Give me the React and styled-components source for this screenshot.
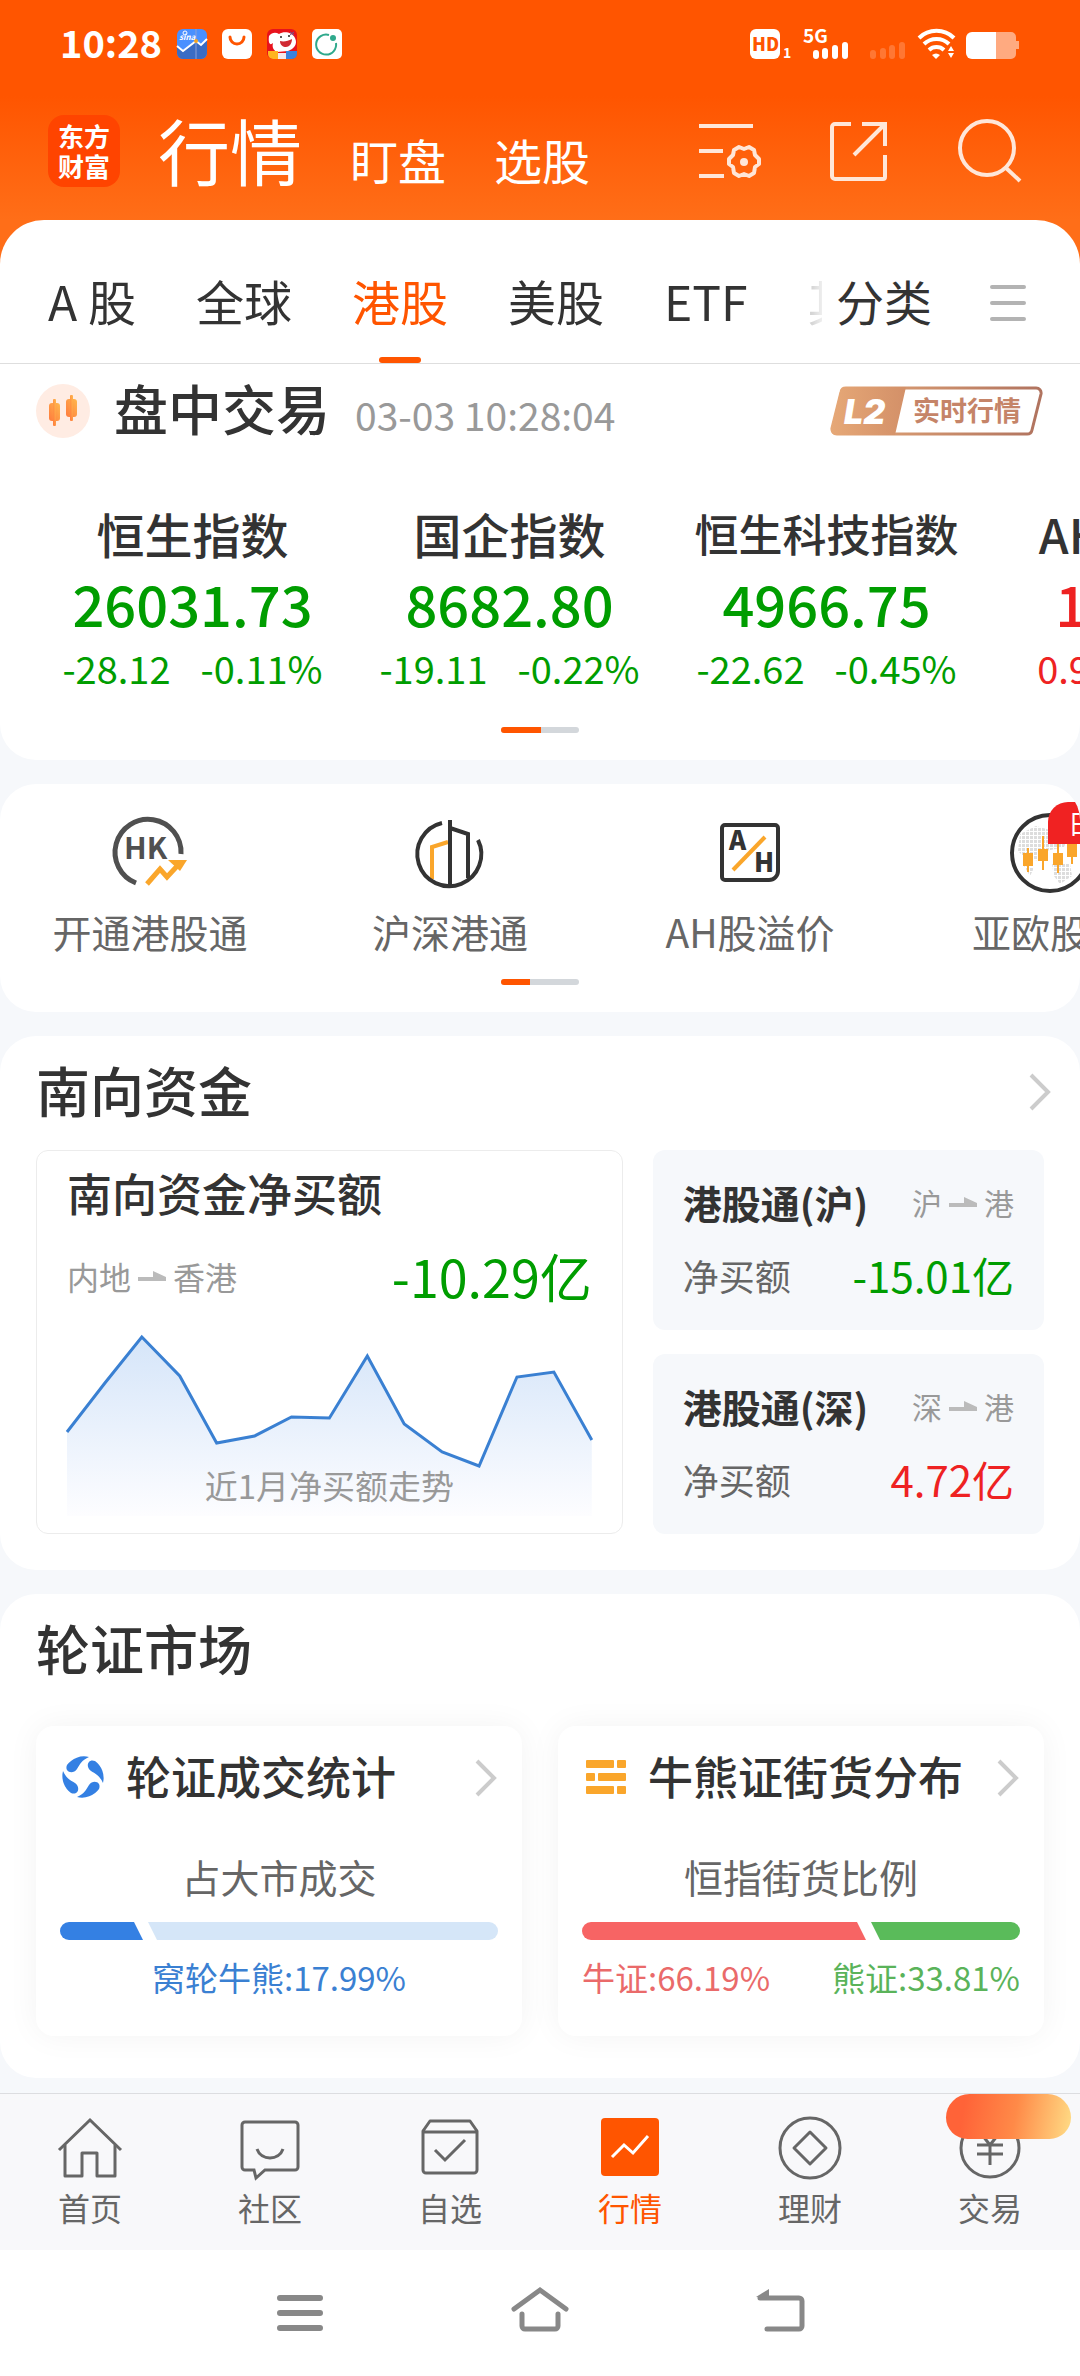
import React, { useState } from 'react'
import styled, { createGlobalStyle } from 'styled-components'

const GlobalStyle = createGlobalStyle`
  * {
    box-sizing: border-box;
  }

  body {
    margin: 0;
    background: #fff;
    font-family: "Noto Sans CJK SC", "Noto Sans", sans-serif;
    color: #333;
  }

  button {
    margin: 0;
    padding: 0;
    border: 0;
    background: none;
    font: inherit;
    color: inherit;
    cursor: pointer;
  }

  a {
    color: inherit;
    text-decoration: none;
  }

  h1, h2, h3, p {
    margin: 0;
  }

  svg {
    display: block;
    flex: none;
    overflow: visible;
  }
`

/* ---------- layout ---------- */

const Page = styled.div`
  display: flex;
  flex-direction: column;
  min-height: 100vh;
  overflow: hidden;
  background: #f6f8fb;
`

const Header = styled.header`
  background: linear-gradient(#ff5500 0, #ff5500 96px, #ff6e18 220px);
  padding-bottom: 50px;
`

const StatusBar = styled.div`
  display: flex;
  align-items: center;
  justify-content: space-between;
  height: 88px;
  padding: 0 58px 0 60px;
  color: #fff;
`

const StatusGroup = styled.div`
  display: flex;
  align-items: center;
  gap: ${props => props.$gap}px;
`

const Clock = styled.span`
  padding-bottom: 4px;
  font-size: 38px;
  line-height: 48px;
  font-weight: 700;
`

const TopNav = styled.div`
  display: flex;
  align-items: center;
  height: 126px;
  padding: 0 58px 0 48px;
  color: #fff;
`

const Logo = styled.a`
  display: flex;
  flex-direction: column;
  align-items: center;
  justify-content: center;
  width: 72px;
  height: 72px;
  margin-right: 38px;
  border-radius: 16px;
  background: #ff4400;
  font-size: 26px;
  line-height: 30px;
  font-weight: 700;
`

const Titles = styled.nav`
  display: flex;
  align-items: baseline;
  gap: 48px;
  padding-bottom: 4px;
`

const PageTitle = styled.h1`
  font-size: 72px;
  line-height: 72px;
  font-weight: 400;
`

const TitleLink = styled.a`
  font-size: 48px;
  line-height: 48px;
`

const TopActions = styled.div`
  display: flex;
  gap: 66px;
  margin-left: auto;
  color: #ffe6d8;
`

const Card = styled.section`
  margin-bottom: 24px;
  border-radius: 36px;
  background: #fff;
  overflow: hidden;
`

const TopCard = styled(Card)`
  margin-top: -44px;
  border-radius: 44px 44px 36px 36px;
`

/* ---------- tabs ---------- */

const TabBar = styled.div`
  display: flex;
  height: 144px;
  padding: 0 54px 0 48px;
  border-bottom: 1px solid #dedede;
`

const TabList = styled.div`
  display: flex;
  flex: 1;
  gap: 60px;
  min-width: 0;
  overflow: hidden;
  mask-image: linear-gradient(to left, rgba(0, 0, 0, 0.08), rgba(0, 0, 0, 0.24) 13px, #000 60px);
`

const Tab = styled.button`
  display: flex;
  flex: none;
  flex-direction: column;
  align-items: center;
  padding-top: 48px;
  font-size: 48px;
  line-height: 64px;
  white-space: nowrap;
  color: ${props => (props.$active ? '#ff5500' : '#333')};

  &::after {
    content: "";
    width: 42px;
    height: 6px;
    margin-top: auto;
    border-radius: 3px;
    background: ${props => (props.$active ? '#ff5500' : 'transparent')};
  }
`

const CategoryButton = styled(Tab)`
  margin: 0 58px 0 14px;
`

const MenuButton = styled.button`
  padding-top: 22px;
`

/* ---------- index section ---------- */

const MarketHead = styled.div`
  display: flex;
  align-items: center;
  gap: 24px;
  height: 94px;
  padding: 0 36px;
`

const MarketTitle = styled.div`
  display: flex;
  flex: 1;
  align-items: baseline;
  gap: 25px;
  padding-bottom: 6px;
`

const SectionTitle = styled.h2`
  font-size: 54px;
  line-height: 72px;
  font-weight: 500;
`

const Time = styled.time`
  font-size: 39px;
  line-height: 48px;
  color: #999;
`

const IndexList = styled.div`
  display: flex;
  padding: 45px 34px 0;
`

const IndexItem = styled.div`
  display: flex;
  flex: none;
  flex-direction: column;
  align-items: center;
  width: 317px;
  color: ${props => (props.$up ? '#ee2222' : '#009d00')};
`

const IndexName = styled.h3`
  font-size: ${props => (props.$long ? 44 : 48)}px;
  line-height: 60px;
  font-weight: 500;
  color: #333;
`

const IndexValue = styled.div`
  font-size: 56px;
  line-height: 80px;
  font-weight: 500;
`

const IndexChange = styled.div`
  display: flex;
  gap: 30px;
  font-size: 38px;
  line-height: 50px;
`

const Pager = styled.div`
  width: 78px;
  height: 6px;
  margin: ${props => props.$top}px auto 27px;
  border-radius: 3px;
  background: #d3d7db;
  overflow: hidden;

  &::before {
    content: "";
    display: block;
    width: ${props => props.$active}px;
    height: 6px;
    background: #ff5500;
  }
`

/* ---------- shortcuts ---------- */

const Shortcuts = styled.div`
  display: flex;
  padding-top: 28px;
`

const Shortcut = styled.a`
  position: relative;
  display: flex;
  flex: none;
  flex-direction: column;
  align-items: center;
  gap: 15px;
  width: 300px;
  font-size: 39px;
  line-height: 48px;
  color: #666;
`

const ShortcutBadge = styled.span`
  position: absolute;
  top: -10px;
  left: 148px;
  padding: 0 20px;
  border-radius: 20px 20px 20px 0;
  background: #f02222;
  font-size: 26px;
  line-height: 42px;
  white-space: nowrap;
  color: #fff;
`

/* ---------- southbound funds ---------- */

const CardHead = styled.div`
  display: flex;
  align-items: center;
  justify-content: space-between;
  padding: 18px 28px 0 36px;
`

const FundGrid = styled.div`
  display: grid;
  grid-template-columns: 3fr 2fr;
  grid-template-rows: 180px 180px;
  gap: 24px 30px;
  padding: 24px 36px 36px;
`

const FlowPanel = styled.div`
  position: relative;
  grid-row: span 2;
  padding: 18px 30px;
  border: 1px solid #ececec;
  border-radius: 12px;
`

const PanelTitle = styled.h3`
  font-size: 45px;
  line-height: 48px;
  font-weight: 500;
`

const Row = styled.div`
  display: flex;
  align-items: center;
  justify-content: space-between;
`

const FlowRow = styled(Row)`
  margin: 29px 0 30px;
`

const Route = styled.span`
  display: flex;
  align-items: center;
  gap: 7px;
  font-size: ${props => (props.$small ? 30 : 32)}px;
  line-height: 48px;
  color: #999;
`

const Amount = styled.span`
  font-size: ${props => (props.$large ? 52 : 42)}px;
  line-height: ${props => (props.$large ? 60 : 48)}px;
  color: ${props => (props.$up ? '#ee2222' : '#009d00')};
`

const ChartCaption = styled.div`
  position: absolute;
  right: 0;
  bottom: 28px;
  left: 0;
  text-align: center;
  font-size: 33px;
  line-height: 40px;
  color: #999;
`

const ConnectCard = styled.div`
  display: flex;
  flex-direction: column;
  gap: 25px;
  padding: 28px 30px 0;
  border-radius: 12px;
  background: #f6f8fb;
`

const ConnectTitle = styled.h3`
  font-size: 39px;
  line-height: 48px;
  font-weight: 700;
`

const ConnectLabel = styled.span`
  font-size: 36px;
  line-height: 48px;
  color: #666;
`

/* ---------- warrants ---------- */

const WarrantGrid = styled.div`
  display: grid;
  grid-template-columns: 1fr 1fr;
  gap: 36px;
  padding: 42px 36px;
`

const WarrantCard = styled.div`
  height: 310px;
  padding: 24px 24px 0;
  border-radius: 18px;
  box-shadow: 0 0 32px rgba(0, 0, 0, 0.05);
`

const WarrantHead = styled.div`
  display: flex;
  align-items: center;
  gap: 22px;

  h3 {
    flex: 1;
    line-height: 52px;
    white-space: nowrap;
  }
`

const WarrantCaption = styled.div`
  margin: 50px 0 22px;
  text-align: center;
  font-size: 39px;
  line-height: 48px;
  color: #666;
`

const Ratio = styled.div`
  display: flex;
  gap: 5px;
  height: 18px;
  border-radius: 9px;
  overflow: hidden;
`

const RatioPart = styled.div`
  background: ${props => props.$color};
  clip-path: ${props =>
    props.$end
      ? 'polygon(0 0, 100% 0, 100% 100%, 9px 100%)'
      : 'polygon(0 0, calc(100% - 9px) 0, 100% 100%, 0 100%)'};
`

const RatioLabels = styled.div`
  display: flex;
  justify-content: ${props => (props.$single ? 'center' : 'space-between')};
  margin-top: 17px;
  font-size: 33px;
  line-height: 40px;
`

const RatioLabel = styled.span`
  color: ${props => props.$color};
`

/* ---------- bottom bars ---------- */

const BottomNav = styled.nav`
  display: grid;
  grid-template-columns: repeat(6, 1fr);
  margin-top: -9px;
  border-top: 1px solid #dcdde0;
  background: #f8f8fa;
`

const NavItem = styled.a`
  position: relative;
  display: flex;
  flex-direction: column;
  align-items: center;
  gap: 7px;
  padding: 22px 0 23px;
  font-size: 32px;
  line-height: 40px;
  color: ${props => (props.$active ? '#ff5500' : '#666')};
`

const NavBadge = styled.span`
  position: absolute;
  top: 0;
  right: 9px;
  width: 125px;
  height: 45px;
  border-radius: 24px 24px 22px 22px;
  background: linear-gradient(100deg, #ff6338 15%, #ff8a48 55%, #ffd983 98%);
`

const SystemNav = styled.div`
  display: flex;
  flex: 1;
  justify-content: center;
  gap: 176px;
  padding: 30px 0 32px;
  background: #fff;
  color: #888;
`

/* ---------- icons ---------- */

const Icon = ({ size = 64, width = 3, children }) => (
  <svg
    width={size}
    height={size}
    viewBox={`0 0 ${size} ${size}`}
    fill="none"
    stroke="currentColor"
    strokeWidth={width}
    aria-hidden="true"
  >
    {children}
  </svg>
)

const Chevron = () => (
  <svg width="24" height="40" viewBox="0 0 24 40" fill="none" stroke="#ccc" strokeWidth="4" aria-hidden="true">
    <path d="M3 5l17 17L3 39" />
  </svg>
)

const HalfArrow = () => (
  <svg width="28" height="12" viewBox="0 0 28 12" fill="#bbb" aria-hidden="true">
    <path d="M0 7h15V1l13 6v4H0z" />
  </svg>
)

const AppIcons = () => (
  <>
    <svg width="30" height="30" viewBox="0 0 30 30" aria-hidden="true">
      <rect width="30" height="30" rx="6" fill="#4a90ff" />
      <path d="M0 17l6 5 13-10 5 4 6-6v14a6 6 0 0 1-6 6H6a6 6 0 0 1-6-6z" fill="#3a6cc4" />
      <path d="M0 17l6 5 13-10 5 4 6-6" fill="none" stroke="#fff" strokeWidth="2" />
      <path d="M19 0v30" stroke="#8aa0d8" />
      <circle cx="19" cy="12" r="2" fill="#f5a623" />
      <circle cx="8" cy="4" r="2" fill="none" stroke="#fff" />
      <text x="2" y="11" fill="#fff" fontSize="8" fontWeight="700" fontStyle="italic">sina</text>
    </svg>
    <svg width="30" height="30" viewBox="0 0 30 30" aria-hidden="true">
      <rect width="30" height="30" rx="6" fill="#fff" />
      <path d="M8 8a7 7 0 0 0 14 0" fill="none" stroke="#ff5500" strokeWidth="3" strokeLinecap="round" />
    </svg>
    <svg width="30" height="30" viewBox="0 0 30 30" aria-hidden="true">
      <rect width="30" height="30" rx="6" fill="#e8121c" />
      <path d="M2 7c3-4 7-4 10-2 5-3 13-2 16 4 3 6-1 11-7 13l-11 1c-4-2-5-5-4-9-3 3-5 0-4-7z" fill="#fff" />
      <path d="M13 12c4 1 8 0 12-2 0 5-3 8-6 8s-6-2-6-6z" fill="#d02a33" />
      <circle cx="14" cy="8" r="1" fill="#222" />
      <circle cx="22" cy="7" r="1" fill="#222" />
      <path d="M1 22h10v8H6a5 5 0 0 1-5-5z" fill="#ffb41e" />
      <path d="M11 24h8v6h-8z" fill="#f4e8ea" />
      <path d="M19 22h11v3a5 5 0 0 1-5 5h-6z" fill="#3a82dd" />
      <path d="M23 3l4 3m0-3l-4 3" stroke="#6a5a9a" />
    </svg>
    <svg width="30" height="30" viewBox="0 0 30 30" aria-hidden="true">
      <rect width="30" height="30" rx="5" fill="#fff" />
      <path d="M17 6a10 10 0 1 0 7 8" fill="none" stroke="#2fa98c" strokeWidth="2" />
      <circle cx="21" cy="9" r="3" fill="#2fa98c" />
    </svg>
  </>
)

const StatusIcons = () => (
  <svg width="272" height="32" viewBox="0 0 272 32" fill="#fff" aria-hidden="true">
    <rect x="0" y="1" width="30" height="30" rx="6" />
    <text x="2" y="23" fill="#ff5500" fontSize="18" fontWeight="900">HD</text>
    <text x="33" y="30" fontSize="14" fontWeight="700">1</text>
    <text x="53" y="15" fontSize="19" fontWeight="700">5G</text>
    <rect x="63" y="22" width="6" height="9" rx="3" />
    <rect x="72" y="20" width="6" height="11" rx="3" />
    <rect x="82" y="17" width="6" height="14" rx="3" />
    <rect x="92" y="14" width="6" height="17" rx="3" />
    <g opacity="0.2">
      <rect x="120" y="22" width="6" height="9" rx="3" />
      <rect x="130" y="20" width="6" height="11" rx="3" />
      <rect x="139" y="17" width="6" height="14" rx="3" />
      <rect x="149" y="14" width="6" height="17" rx="3" />
    </g>
    <g fill="none" stroke="#fff" strokeWidth="4">
      <path d="M169 10a25 25 0 0 1 35 0" />
      <path d="M174 16a18 18 0 0 1 25 0" />
      <path d="M179 22a11 11 0 0 1 15 0" />
    </g>
    <path d="M182 27q4-3 8 0l-4 4z" />
    <path d="M198 23l3-5 3 5zM198 25h6l-3 5z" />
    <path d="M266 8v18a5 5 0 0 1-5 5h-15V4h15a5 5 0 0 1 5 5v4h3v8h-3z" opacity="0.5" />
    <path d="M246 4h-24a6 6 0 0 0-6 6v15a6 6 0 0 0 6 6h24z" />
  </svg>
)

const CandleIcon = () => (
  <svg width="54" height="54" viewBox="0 0 54 54" aria-hidden="true">
    <defs>
      <linearGradient id="candle" x1="0" y1="1" x2="1" y2="0">
        <stop offset="0" stopColor="#ff7a3d" />
        <stop offset="1" stopColor="#ffb84d" />
      </linearGradient>
    </defs>
    <circle cx="27" cy="27" r="27" fill="#ffece3" />
    <g fill="url(#candle)">
      <rect x="13" y="19" width="11" height="18" rx="3" />
      <rect x="17" y="15" width="3" height="27" rx="1" />
      <rect x="30" y="15" width="11" height="18" rx="3" />
      <rect x="34" y="11" width="3" height="26" rx="1" />
    </g>
  </svg>
)

const LevelTwoBadge = () => (
  <svg width="214" height="50" viewBox="0 0 214 50" role="img" aria-label="L2 实时行情">
    <defs>
      <linearGradient id="level" x1="0" y1="0" x2="1" y2="0">
        <stop offset="0" stopColor="#e6a877" />
        <stop offset="1" stopColor="#b0735f" />
      </linearGradient>
      <linearGradient id="levelFill" x1="0" y1="0" x2="1" y2="0">
        <stop offset="0" stopColor="#e6a877" />
        <stop offset="1" stopColor="#d39068" />
      </linearGradient>
    </defs>
    <path d="M16 2h190a5 5 0 0 1 5 6l-9 36a5 5 0 0 1-5 4H7a5 5 0 0 1-5-6l9-36a5 5 0 0 1 5-4z" fill="#fff" stroke="url(#level)" strokeWidth="3" />
    <path d="M15 1h61L65 49H6a5 5 0 0 1-5-6l9-37a5 5 0 0 1 5-5z" fill="url(#levelFill)" />
    <text x="14" y="38" fill="#fff" fontSize="34" fontWeight="900" fontStyle="italic" fontFamily="Inter, sans-serif">L2</text>
    <text x="83" y="35" fill="#c58468" fontSize="27" fontWeight="700">实时行情</text>
  </svg>
)

const HkIcon = () => (
  <Icon size={80} width={5}>
    <path d="M26 71A33 33 0 1 1 71 42" stroke="#505050" />
    <text x="14" y="47" fill="#505050" stroke="none" fontSize="30" fontWeight="700">HK</text>
    <path d="M37 72l13-15 7 8 13-14" stroke="#faa62b" />
    <path d="M58 48h19l-7 11z" fill="#faa62b" stroke="none" />
  </Icon>
)

const BuildingIcon = () => (
  <Icon size={80} width={4}>
    <path d="M22 67V35l16-5" stroke="#faa62b" />
    <g stroke="#333">
      <path d="M32 11a32 32 0 1 0 36 17" />
      <path d="M40 8v65M40 16l18 6v44" />
    </g>
  </Icon>
)

const AhIcon = () => (
  <Icon size={80} width={4}>
    <path d="M15 13h50a3 3 0 0 1 3 3v43a9 9 0 0 1-9 9H15a3 3 0 0 1-3-3V16a3 3 0 0 1 3-3z" stroke="#333" />
    <path d="M23 58l32-33" stroke="#faa62b" />
    <text x="19" y="38" fill="#333" stroke="none" fontSize="26" fontWeight="900">A</text>
    <text x="44" y="60" fill="#333" stroke="none" fontSize="26" fontWeight="900">H</text>
  </Icon>
)

const GlobeIcon = () => (
  <Icon size={80} width={4}>
    <defs>
      <pattern id="dots" width="4" height="4" patternUnits="userSpaceOnUse">
        <rect width="3" height="3" fill="#ddd" stroke="none" />
      </pattern>
    </defs>
    <path d="M10 22l16-8 14 4 20 3-6 14-18 4-4 10-16-2-8-8zM42 52h18l2 12-12 8-6-8zM14 54l10 2-4 8z" fill="url(#dots)" stroke="none" />
    <circle cx="40" cy="41" r="38" stroke="#333" />
    <path d="M18 36v24M33 24v34M48 30v31M62 28v24" stroke="#faa62b" strokeWidth="2" />
    <path d="M18 41v13M33 37v12M48 41v12M62 32v13" stroke="#faa62b" strokeWidth="10" />
  </Icon>
)

const SwirlIcon = () => (
  <svg width="44" height="44" viewBox="0 0 44 44" fill="#3480e3" aria-hidden="true">
    {[0, 90, 180, 270].map(angle => (
      <path key={angle} transform={`rotate(${angle} 23 23)`} d="M29 3A21 21 0 0 0 7 11C4 18 13 21 17 15c3-5 5-9 12-12z" />
    ))}
  </svg>
)

const BricksIcon = () => (
  <svg width="44" height="44" viewBox="0 0 44 44" fill="#faa62b" aria-hidden="true">
    <rect x="4" y="6" width="28" height="8" rx="1" />
    <rect x="35" y="6" width="9" height="8" rx="1" />
    <rect x="4" y="19" width="9" height="8" rx="1" />
    <rect x="16" y="19" width="28" height="8" rx="1" />
    <rect x="4" y="32" width="28" height="8" rx="1" />
    <rect x="35" y="32" width="9" height="8" rx="1" />
  </svg>
)

const navIcons = {
  home: (
    <Icon>
      <path d="M1 34L32 4l31 30" />
      <path d="M7 29v31h17V37h15v23h18V29" strokeLinejoin="round" />
    </Icon>
  ),
  community: (
    <Icon>
      <path d="M7 6h50a3 3 0 0 1 3 3v42a3 3 0 0 1-3 3H27l-9 8-2-8H7a3 3 0 0 1-3-3V9a3 3 0 0 1 3-3z" />
      <path d="M19 33c4 12 22 12 26 0" />
    </Icon>
  ),
  watch: (
    <Icon>
      <path d="M5 15l7-10h40l7 10v39a3 3 0 0 1-3 3H8a3 3 0 0 1-3-3zM5 16h54" strokeLinejoin="round" />
      <path d="M17 34l10 10 20-20" />
    </Icon>
  ),
  market: (
    <Icon>
      <rect x="3" y="2" width="58" height="58" rx="4" fill="#ff5500" stroke="none" />
      <path d="M14 41l12-12 9 8 15-17" stroke="#fff" />
    </Icon>
  ),
  finance: (
    <Icon>
      <circle cx="32" cy="32" r="30" />
      <path d="M32 16l16 16-16 16-16-16z" strokeLinejoin="round" />
    </Icon>
  ),
  trade: (
    <Icon>
      <circle cx="32" cy="32" r="29" />
      <path d="M21 15l11 14 11-14M32 29v20M19 29h26M19 38h26" />
    </Icon>
  ),
}

/* ---------- data ---------- */

const tabs = ['A 股', '全球', '港股', '美股', 'ETF', '其他']

const indexes = [
  { name: '恒生指数', value: '26031.73', change: '-28.12', percent: '-0.11%' },
  { name: '国企指数', value: '8682.80', change: '-19.11', percent: '-0.22%' },
  { name: '恒生科技指数', value: '4966.75', change: '-22.62', percent: '-0.45%', long: true },
  { name: 'AH股溢价', value: '118.46', change: '0.97', percent: '0.83%', up: true },
]

const shortcuts = [
  { label: '开通港股通', icon: <HkIcon /> },
  { label: '沪深港通', icon: <BuildingIcon /> },
  { label: 'AH股溢价', icon: <AhIcon /> },
  { label: '亚欧股指', icon: <GlobeIcon />, badge: '日韩' },
]

const connects = [
  { name: '港股通(沪)', from: '沪', amount: '-15.01亿' },
  { name: '港股通(深)', from: '深', amount: '4.72亿', up: true },
]

const navItems = [
  { id: 'home', label: '首页' },
  { id: 'community', label: '社区' },
  { id: 'watch', label: '自选' },
  { id: 'market', label: '行情' },
  { id: 'finance', label: '理财' },
  { id: 'trade', label: '交易', badge: true },
]

// net buying over the last month, top of the chart = 0
const flow = [95, 46, 0, 39, 106, 99, 80, 81, 19, 87, 115, 129, 40, 35, 103]

const FlowChart = () => {
  const points = flow.map((y, i) => `${Math.round((i * 526) / (flow.length - 1))},${y + 1}`).join(' ')

  return (
    <svg width="100%" height="180" viewBox="0 0 526 180" preserveAspectRatio="none" role="img" aria-label="近1月净买额走势">
      <defs>
        <linearGradient id="flow" x1="0" y1="0" x2="0" y2="1">
          <stop offset="0" stopColor="#d5e5f9" />
          <stop offset="1" stopColor="#fdfdff" />
        </linearGradient>
      </defs>
      <polygon points={`0,180 ${points} 526,180`} fill="url(#flow)" />
      <polyline points={points} fill="none" stroke="#3a80d2" strokeWidth="3" />
    </svg>
  )
}

const Warrant = ({ icon, title, caption, parts }) => (
  <WarrantCard>
    <WarrantHead>
      {icon}
      <PanelTitle>{title}</PanelTitle>
      <Chevron />
    </WarrantHead>
    <WarrantCaption>{caption}</WarrantCaption>
    <Ratio>
      {parts.map((part, i) => (
        <RatioPart key={i} $color={part.color} $end={i > 0} style={{ flex: `${part.value} 1 8px` }} />
      ))}
    </Ratio>
    <RatioLabels $single={!parts[1].label}>
      {parts
        .filter(part => part.label)
        .map(part => (
          <RatioLabel key={part.label} $color={part.text}>
            {part.label}:{part.value}%
          </RatioLabel>
        ))}
    </RatioLabels>
  </WarrantCard>
)

const App = () => {
  const [activeTab, setActiveTab] = useState('港股')

  return (
    <>
      <GlobalStyle />
      <Page>
        <Header>
          <StatusBar>
            <StatusGroup $gap={15}>
              <Clock>10:28</Clock>
              <AppIcons />
            </StatusGroup>
            <StatusIcons />
          </StatusBar>
          <TopNav>
            <Logo href="#">
              <span>东方</span>
              <span>财富</span>
            </Logo>
            <Titles>
              <PageTitle>行情</PageTitle>
              <TitleLink href="#">盯盘</TitleLink>
              <TitleLink href="#">选股</TitleLink>
            </Titles>
            <TopActions>
              <button aria-label="设置">
                <Icon width={4}>
                  <path d="M1 7h54M1 32h24M1 57h25" />
                  <path d="M41 28l5 2 5-2 5 3 1 5 4 4v5l-4 3-1 6-5 3-5-2-5 2-5-3-1-6-4-3v-5l4-4 1-5z" strokeLinejoin="round" />
                  <circle cx="46" cy="43" r="4" fill="currentColor" stroke="none" />
                </Icon>
              </button>
              <button aria-label="分享">
                <Icon width={4}>
                  <path d="M23 5H7a3 3 0 0 0-3 3v49a3 3 0 0 0 3 3h48a2 2 0 0 0 2-2V36M34 5h23v22M56 6L26 36" />
                </Icon>
              </button>
              <button aria-label="搜索">
                <Icon width={4}>
                  <circle cx="29" cy="29" r="27" />
                  <path d="M47 48l15 14" />
                </Icon>
              </button>
            </TopActions>
          </TopNav>
        </Header>

        <TopCard>
          <TabBar>
            <TabList>
              {tabs.map(tab => (
                <Tab key={tab} $active={tab === activeTab} onClick={() => setActiveTab(tab)}>
                  {tab}
                </Tab>
              ))}
            </TabList>
            <CategoryButton>分类</CategoryButton>
            <MenuButton aria-label="全部分类">
              <svg width="36" height="38" viewBox="0 0 36 38" stroke="#b3b3b3" strokeWidth="4" strokeLinecap="round">
                <path d="M2 3h32M2 19h32M2 35h32" />
              </svg>
            </MenuButton>
          </TabBar>
          <MarketHead>
            <CandleIcon />
            <MarketTitle>
              <SectionTitle>盘中交易</SectionTitle>
              <Time>03-03 10:28:04</Time>
            </MarketTitle>
            <a href="#"><LevelTwoBadge /></a>
          </MarketHead>
          <IndexList>
            {indexes.map(item => (
              <IndexItem key={item.name} $up={item.up}>
                <IndexName $long={item.long}>{item.name}</IndexName>
                <IndexValue>{item.value}</IndexValue>
                <IndexChange>
                  <span>{item.change}</span>
                  <span>{item.percent}</span>
                </IndexChange>
              </IndexItem>
            ))}
          </IndexList>
          <Pager $top={34} $active={40} />
        </TopCard>

        <Card>
          <Shortcuts>
            {shortcuts.map(item => (
              <Shortcut key={item.label} href="#">
                {item.icon}
                {item.label}
                {item.badge && <ShortcutBadge>{item.badge}</ShortcutBadge>}
              </Shortcut>
            ))}
          </Shortcuts>
          <Pager $top={24} $active={29} />
        </Card>

        <Card>
          <CardHead>
            <SectionTitle>南向资金</SectionTitle>
            <Chevron />
          </CardHead>
          <FundGrid>
            <FlowPanel>
              <PanelTitle>南向资金净买额</PanelTitle>
              <FlowRow>
                <Route>内地<HalfArrow />香港</Route>
                <Amount $large>-10.29亿</Amount>
              </FlowRow>
              <FlowChart />
              <ChartCaption>近1月净买额走势</ChartCaption>
            </FlowPanel>
            {connects.map(item => (
              <ConnectCard key={item.name}>
                <Row>
                  <ConnectTitle>{item.name}</ConnectTitle>
                  <Route $small>{item.from}<HalfArrow />港</Route>
                </Row>
                <Row>
                  <ConnectLabel>净买额</ConnectLabel>
                  <Amount $up={item.up}>{item.amount}</Amount>
                </Row>
              </ConnectCard>
            ))}
          </FundGrid>
        </Card>

        <Card>
          <CardHead>
            <SectionTitle>轮证市场</SectionTitle>
          </CardHead>
          <WarrantGrid>
            <Warrant
              icon={<SwirlIcon />}
              title="轮证成交统计"
              caption="占大市成交"
              parts={[
                { label: '窝轮牛熊', value: 17.99, color: '#3480e3', text: '#3a80d2' },
                { value: 82.01, color: '#d5e6f8' },
              ]}
            />
            <Warrant
              icon={<BricksIcon />}
              title="牛熊证街货分布"
              caption="恒指街货比例"
              parts={[
                { label: '牛证', value: 66.19, color: '#f76464', text: '#ea6a6a' },
                { label: '熊证', value: 33.81, color: '#5abb5a', text: '#5ab35a' },
              ]}
            />
          </WarrantGrid>
        </Card>

        <BottomNav>
          {navItems.map(item => (
            <NavItem key={item.id} href="#" $active={item.id === 'market'}>
              {navIcons[item.id]}
              {item.label}
              {item.badge && <NavBadge />}
            </NavItem>
          ))}
        </BottomNav>
        <SystemNav>
          <button aria-label="最近任务">
            <Icon width={6}>
              <path d="M12 18h40M12 33h40M12 48h40" strokeLinecap="round" />
            </Icon>
          </button>
          <button aria-label="主屏幕">
            <Icon width={5}>
              <path d="M6 29L32 10l26 19M14 34v12a3 3 0 0 0 3 3h30a3 3 0 0 0 3-3V34" strokeLinecap="round" />
            </Icon>
          </button>
          <button aria-label="返回">
            <Icon width={5}>
              <path d="M19 49h32a3 3 0 0 0 3-3V21a3 3 0 0 0-3-3H12" strokeLinecap="round" />
              <path d="M8 17l13-8v9z" fill="currentColor" stroke="none" />
            </Icon>
          </button>
        </SystemNav>
      </Page>
    </>
  )
}

export default App
